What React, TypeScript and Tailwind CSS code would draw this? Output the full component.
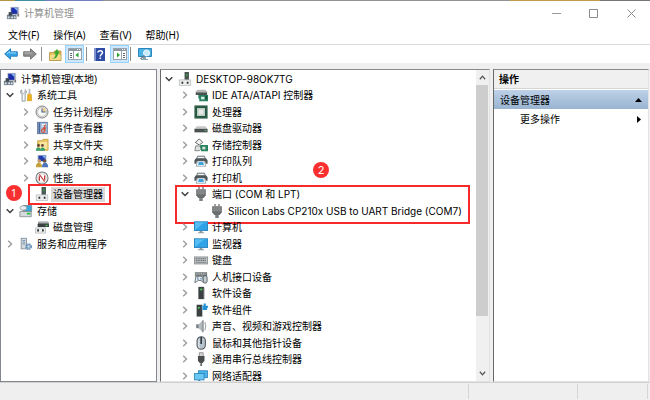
import type { ReactNode } from "react";

type IconName =
  | "computer" | "tools" | "clock" | "event" | "share" | "users" | "perf" | "device"
  | "storage" | "disk" | "services" | "ide" | "cpu" | "drive" | "storagectl" | "printer"
  | "plug" | "monitor" | "keyboard" | "hid" | "software" | "component" | "speaker"
  | "mouse" | "usb" | "network";

const art: Record<IconName, ReactNode> = {
  computer: (
    <>
      <rect x="5" y="1" width="10" height="9" fill="#b9bdc4" />
      <rect x="6" y="2" width="7" height="7" fill="#1c2fa8" />
      <path d="M9 2h4v4z" fill="#7fb2f5" />
      <path d="M13 9h2v3h-2z" fill="#777" />
      <path d="M1 10h11v5H1z" fill="#6f7d8a" />
      <path d="M3 7h4v4H3z" fill="#3c4852" />
      <path d="M2 12h2v2H2zM6 12h2v2H6zM9 12h2v2H9z" fill="#dfe6ea" />
    </>
  ),
  tools: (
    <>
      <path d="M3 2v3l2 1.500 2-1.500V2c2 1 2 4 0 5v8H3.500V7C1 6 1.500 3 3 2z" fill="#f4f6f7" stroke="#8b9399" strokeWidth="1" />
      <path d="M11 1h2v6h-2z" fill="#b8bcc0" />
      <path d="M10 7h4l.5 7.500h-5z" fill="#efb21e" stroke="#c98d0c" strokeWidth=".6" />
    </>
  ),
  clock: (
    <>
      <circle cx="8" cy="8" r="6.900" fill="#dcdcd8" stroke="#77797c" strokeWidth="1" />
      <circle cx="8" cy="8" r="5" fill="#fbfaf4" stroke="#aaa" strokeWidth=".6" />
      <path d="M8 3.500A4.500 4.500 0 0112.500 8H8z" fill="#f2d28a" />
      <path d="M8 4v4h4" fill="none" stroke="#3f5e93" strokeWidth="1.200" />
    </>
  ),
  event: (
    <>
      <rect x="3" y="1.500" width="11" height="13" fill="#a9c4e3" stroke="#536f99" />
      <path d="M4 2h2v12H4z" fill="#4b6792" />
      <path d="M8 4h5M8 6h3" stroke="#fff" />
      <path d="M12 4l-2 4h2l-2 3" stroke="#d4462c" strokeWidth="1.300" fill="none" />
      <circle cx="9.500" cy="11" r="2" fill="none" stroke="#d44a2c" strokeWidth="1.300" />
    </>
  ),
  share: (
    <>
      <path d="M3 3h5l1-1.500h6V14H3z" fill="#eac55f" stroke="#b88d2a" strokeWidth=".7" />
      <path d="M5 4.500h9v8H5z" fill="#f8e3a0" />
      <circle cx="4" cy="8.500" r="1.600" fill="#604432" />
      <circle cx="8.500" cy="8.500" r="1.600" fill="#604432" />
      <path d="M1 14.500c0-5 5.500-5 5.500 0zM6 14.500c0-5 5.500-5 5.500 0z" fill="#35a070" />
    </>
  ),
  users: (
    <>
      <rect x="3" y="1" width="10" height="8" fill="#aab4c0" />
      <rect x="4" y="2" width="8" height="6" fill="#213db0" />
      <path d="M8 2h4v4z" fill="#7fb2f5" />
      <circle cx="5" cy="8" r="2" fill="#c79865" />
      <circle cx="11" cy="8" r="2" fill="#72503a" />
      <path d="M1 15c0-7 7-7 7 0z" fill="#c1a13a" />
      <path d="M8 15c0-7 7-7 7 0z" fill="#4c72b9" />
    </>
  ),
  perf: (
    <>
      <circle cx="8" cy="8" r="6.900" fill="#efefef" stroke="#77797c" strokeWidth="1.200" />
      <circle cx="8" cy="8" r="4.800" fill="#fff" stroke="#bbb" strokeWidth=".6" />
      <path d="M5 4l6 8M5 11V6M11 5v5" stroke="#c02f30" strokeWidth="1.400" fill="none" />
    </>
  ),
  device: (
    <>
      <rect x="7.500" y="0" width="5" height="9" fill="#4a5452" />
      <path d="M9 2h2v3H9z" fill="#3f8f4a" />
      <path d="M1.500 9h13v6.500h-13z" fill="#eceeee" stroke="#b0b4b6" strokeWidth=".8" />
      <path d="M4 11h2v2.500H4zM10 11h2v2.500h-2z" fill="#2c3233" />
    </>
  ),
  storage: (
    <>
      <rect x="4" y="1" width="11" height="8" rx="1" fill="#8c969c" />
      <rect x="7" y="2" width="7" height="6" fill="#35a5da" />
      <ellipse cx="5" cy="4.500" rx="4" ry="2.500" fill="#e7ecef" stroke="#7d888e" strokeWidth=".7" />
      <path d="M1 8.500h13v6H1z" fill="#d5dadc" stroke="#737c80" strokeWidth=".8" />
      <path d="M9 10h4v2H9z" fill="#2fbd47" />
    </>
  ),
  disk: (
    <>
      <path d="M4 2h11l1 3v3H3V5z" fill="#3b4142" />
      <path d="M4 2h11l.5 2h-12z" fill="#a9aeb0" />
      <path d="M12 5.500h2.500V7H12z" fill="#48c455" />
      <path d="M.5 9h11.500v6H.5z" fill="#eceeee" stroke="#b0b4b6" strokeWidth=".8" />
      <path d="M2.500 10.500h2V13h-2zM8 10.500h2V13H8z" fill="#2c3233" />
    </>
  ),
  services: (
    <>
      <rect x="2.500" y="1.500" width="6" height="12" fill="#d4dade" stroke="#85909a" />
      <path d="M4 4h3M4 6h3M4 8h3" stroke="#6b8aaa" />
      <circle cx="11" cy="11" r="3" fill="none" stroke="#7198bd" strokeWidth="2" strokeDasharray="1.600 .8" />
      <circle cx="11" cy="11" r="2" fill="#c4d8ea" stroke="#5f89b3" />
    </>
  ),
  ide: (
    <>
      <path d="M2 4l2-2h9l2 2v1H2z" fill="#b4b8b8" />
      <path d="M2 5h13v3H2z" fill="#4d5353" />
      <path d="M5 8h11v7H6V12H5z" fill="#258060" />
      <path d="M8 10h4v3H8z" fill="#d7e8de" />
      <path d="M13 9h2v4h-2z" fill="#164c3a" />
    </>
  ),
  cpu: (
    <>
      <rect x="2" y="2" width="12" height="12" fill="#dfe6e2" stroke="#22553d" strokeWidth="3" />
      <rect x="1" y="1" width="14" height="14" fill="none" stroke="#7fa08e" strokeWidth=".8" strokeDasharray="1 1" />
      <rect x="4.500" y="4.500" width="7" height="7" fill="#e4e8e6" stroke="#a9bdb2" />
    </>
  ),
  drive: (
    <>
      <path d="M3 6h10l2.500 3H.5z" fill="#c5c8c9" />
      <path d="M.5 9h15v4H.5z" fill="#4b5151" />
      <path d="M12 10.500h2v1h-2z" fill="#5ed068" />
    </>
  ),
  storagectl: (
    <>
      <path d="M1.500 5L6 1l4 4-4 3z" fill="#f0f0ef" stroke="#4c5353" />
      <path d="M2 9h4l3 3-3 2.500H1z" fill="#e0e2e1" stroke="#5a6060" strokeWidth=".8" />
      <path d="M7 8h9v7H8v-3H7z" fill="#288260" />
      <path d="M9.500 10H13v3H9.500z" fill="#d5e5dc" />
    </>
  ),
  printer: (
    <>
      <path d="M4 2.500h8l1 3H3z" fill="#f2f6f8" stroke="#535a5d" />
      <path d="M2 5h12l1.500 2v4h-2l-1-3h-9l-1 3h-2V7z" fill="#4f5659" />
      <path d="M4 8h8l1.500 6h-11z" fill="#f4fafd" stroke="#5c6b72" strokeWidth=".6" />
      <path d="M5.500 9h5l.8 3.500H4.700z" fill="#3ea2dc" />
    </>
  ),
  plug: (
    <>
      <path d="M5 0h1.500v2.500H5zM9.500 0H11v2.500H9.500z" fill="#6d7071" />
      <path d="M2.500 2.500h11v7l-2.500 3H5l-2.500-3z" fill="#6a6d6e" />
      <path d="M4.700 3.500v5M6.900 3.500v5M9.100 3.500v5M11.300 3.500v5" stroke="#b2b5b6" strokeWidth=".8" />
      <path d="M6 12.500h4V16H6z" fill="#7d8081" />
    </>
  ),
  monitor: (
    <>
      <rect x="0" y="1.500" width="16" height="11" fill="#2480bd" />
      <rect x="1" y="2.500" width="14" height="9" fill="#55bdf3" />
      <path d="M1 11.500L12 2.500h3v9z" fill="#2fa3e6" />
      <path d="M6.500 12.500h3V14h2v1h-7v-1h2z" fill="#8f999e" />
    </>
  ),
  keyboard: (
    <>
      <rect x=".5" y="4.500" width="15" height="8" fill="#bfc3c5" stroke="#8a8f92" />
      <path d="M2 6.500h12M2 8.500h12" stroke="#565c5f" strokeDasharray="1.400 .6" />
      <path d="M2 10.700h12" stroke="#7b8083" />
    </>
  ),
  hid: (
    <>
      <rect x="1" y="2.500" width="14" height="5" fill="#777d80" />
      <path d="M2 4.500h12" stroke="#dde1e2" strokeDasharray="1.200 .8" />
      <path d="M2 8c4-1.500 6-1 8 0l1 6.500-3-2.500H5l-4 2.500z" fill="#e4eaed" stroke="#535d62" strokeWidth=".9" />
      <rect x="10.500" y="6.500" width="4.500" height="8.500" rx="2.200" fill="#c3cdd4" stroke="#454e53" strokeWidth=".9" />
      <path d="M4.500 8.500v3M8 9v2" stroke="#2b6ea8" />
    </>
  ),
  software: (
    <>
      <rect x="5" y="1" width="6.500" height="14" fill="#3b4042" />
      <path d="M7 3h2.500v2H7z" fill="#4ecb58" />
      <path d="M11 2h1v13h-1z" fill="#9da2a3" />
    </>
  ),
  component: (
    <>
      <rect x="3" y="2" width="6.500" height="13.500" fill="#3b4042" />
      <path d="M4.500 4.500h2v2h-2z" fill="#4ecb58" />
      <path d="M9 3h2V.5h2.500V3H16v2.500h-1V8H9z" fill="#2490d6" />
      <path d="M9 3h1v5H9z" fill="#83c7f1" />
    </>
  ),
  speaker: (
    <>
      <path d="M2.500 6h3v4.500h-3z" fill="#777e82" />
      <path d="M5.500 6L10 1.500V15l-4.500-4.500z" fill="#b3babd" />
      <path d="M9.500 1.500H11V15H9.500z" fill="#7d8589" />
      <path d="M12.500 3.500c1.200 3 1.200 6 0 9.500" fill="none" stroke="#a5adb1" strokeWidth="1.300" />
    </>
  ),
  mouse: (
    <>
      <rect x="3.500" y=".8" width="9.500" height="14.400" rx="4.700" fill="#b7c3cc" stroke="#50595e" strokeWidth="1.200" />
      <path d="M8.200 1v8" stroke="#2f3639" strokeWidth="1.800" />
      <path d="M5.500 4v7c0 1 .5 2 1 2.500" stroke="#eef3f6" fill="none" />
    </>
  ),
  usb: (
    <>
      <path d="M6 .8h4.500V5H6z" fill="#d8d8d8" stroke="#777" strokeWidth=".8" />
      <path d="M4.500 4.500h7.500v5.500l-2 2.500H6.500l-2-2.500z" fill="#4b4e4f" />
      <path d="M7.200 12h2v4h-2z" fill="#67696a" />
    </>
  ),
  network: (
    <>
      <rect x="5" y="2" width="10.500" height="8" fill="#49b4e9" stroke="#1c78b0" strokeWidth=".8" />
      <rect x=".5" y="5" width="11" height="7.500" fill="#69c7f3" stroke="#1c78b0" strokeWidth=".8" />
      <path d="M5 12.500h2v2H5z" fill="#3b83ad" />
    </>
  ),
};

function Icon({ name }: { name: IconName }) {
  return (
    <svg viewBox="0 0 16 16" className="size-[14px] shrink-0" aria-hidden="true">
      {art[name]}
    </svg>
  );
}

type Item = {
  label: string;
  icon: IconName;
  depth: 0 | 1 | 2 | 3;
  state?: "open" | "closed";
  selected?: boolean;
  mark?: ReactNode;
};

const badge =
  "absolute flex size-4 items-center justify-center rounded-full bg-[#f9302f] text-[11px] leading-4 text-white";
const frame = "pointer-events-none absolute border-2 border-[#f62a2a]";

const consoleTree: Item[] = [
  { label: "计算机管理(本地)", icon: "computer", depth: 0 },
  { label: "系统工具", icon: "tools", depth: 0, state: "open" },
  { label: "任务计划程序", icon: "clock", depth: 1, state: "closed" },
  { label: "事件查看器", icon: "event", depth: 1, state: "closed" },
  { label: "共享文件夹", icon: "share", depth: 1, state: "closed" },
  { label: "本地用户和组", icon: "users", depth: 1, state: "closed" },
  { label: "性能", icon: "perf", depth: 1, state: "closed" },
  {
    label: "设备管理器",
    icon: "device",
    depth: 2,
    selected: true,
    mark: (
      <>
        <span className={`${frame} -top-0.5 left-[26px] h-[21px] w-[83px]`} />
        <span className={`${badge} -top-px left-1`}>1</span>
      </>
    ),
  },
  { label: "存储", icon: "storage", depth: 0, state: "open" },
  { label: "磁盘管理", icon: "disk", depth: 2 },
  { label: "服务和应用程序", icon: "services", depth: 0, state: "closed" },
];

const deviceTree: Item[] = [
  { label: "DESKTOP-98OK7TG", icon: "device", depth: 0, state: "open" },
  { label: "IDE ATA/ATAPI 控制器", icon: "ide", depth: 1, state: "closed" },
  { label: "处理器", icon: "cpu", depth: 1, state: "closed" },
  { label: "磁盘驱动器", icon: "drive", depth: 1, state: "closed" },
  { label: "存储控制器", icon: "storagectl", depth: 1, state: "closed" },
  { label: "打印队列", icon: "printer", depth: 1, state: "closed" },
  { label: "打印机", icon: "printer", depth: 1, state: "closed" },
  {
    label: "端口 (COM 和 LPT)",
    icon: "plug",
    depth: 1,
    state: "open",
    mark: (
      <>
        <span className={`${frame} -top-px left-[14px] h-[39px] w-[295px]`} />
        <span className={`${badge} -top-6 left-[152px]`}>2</span>
      </>
    ),
  },
  { label: "Silicon Labs CP210x USB to UART Bridge (COM7)", icon: "plug", depth: 3 },
  { label: "计算机", icon: "monitor", depth: 1, state: "closed" },
  { label: "监视器", icon: "monitor", depth: 1, state: "closed" },
  { label: "键盘", icon: "keyboard", depth: 1, state: "closed" },
  { label: "人机接口设备", icon: "hid", depth: 1, state: "closed" },
  { label: "软件设备", icon: "software", depth: 1, state: "closed" },
  { label: "软件组件", icon: "component", depth: 1, state: "closed" },
  { label: "声音、视频和游戏控制器", icon: "speaker", depth: 1, state: "closed" },
  { label: "鼠标和其他指针设备", icon: "mouse", depth: 1, state: "closed" },
  { label: "通用串行总线控制器", icon: "usb", depth: 1, state: "closed" },
  { label: "网络适配器", icon: "network", depth: 1, state: "closed" },
];

const indent = { 0: "pl-0", 1: "pl-4", 2: "pl-8", 3: "pl-12" };

function Tree({ items, label }: { items: Item[]; label: string }) {
  return (
    <ul role="tree" aria-label={label} className="min-w-0 flex-1">
      {items.map((it) => (
        <li
          key={it.label}
          role="treeitem"
          aria-selected={!!it.selected}
          className={`relative flex items-center whitespace-nowrap odd:h-[17px] even:h-4 ${indent[it.depth]}`}
        >
          {it.state && (
            <button aria-label={it.state === "open" ? "折叠" : "展开"} className="flex w-4 shrink-0 justify-center">
              <svg viewBox="0 0 8 8" className="size-2" fill="none" strokeWidth="1.500" aria-hidden="true">
                {it.state === "open" ? (
                  <path d="M.7 2.200L4 5.500l3.300-3.300" stroke="#404040" />
                ) : (
                  <path d="M2.200.7L5.500 4 2.200 7.300" stroke="#a0a0a0" />
                )}
              </svg>
            </button>
          )}
          <span className="flex w-4 shrink-0 justify-center">
            <Icon name={it.icon} />
          </span>
          <span className={it.selected ? "ml-px bg-[#d9d9d9] px-0.5 leading-[15px]" : "pl-[3px]"}>{it.label}</span>
          {it.mark}
        </li>
      ))}
    </ul>
  );
}

function Separator() {
  return <span className="h-[14px] w-px bg-[#8d8d8d]" />;
}

const toggled = "flex h-[18px] w-[19px] items-center justify-center border border-[#99d1ff] bg-[#cce8ff]";

function Panel({ flip }: { flip?: boolean }) {
  return (
    <svg viewBox="0 0 14 12" className="h-3 w-[14px]" aria-hidden="true">
      <rect x=".5" y=".5" width="13" height="11" fill="#fff" stroke="#9aa3ab" />
      <path d="M1 1h12v2H1z" fill="#8c97a2" />
      <path d="M9 1.500h1M11 1.500h1" stroke="#fff" />
      {flip ? (
        <>
          <path d="M8.500 3v8" stroke="#9aa3ab" />
          <path d="M10 5.500h2M10 7.500h2M10 9.500h2" stroke="#5b6670" />
          <path d="M4 4.500v5L7 7z" fill="#27a52f" />
        </>
      ) : (
        <>
          <path d="M5.500 3v8" stroke="#9aa3ab" />
          <path d="M2 5.500h2M2 7.500h2M2 9.500h2" stroke="#5b6670" />
          <path d="M10.500 4.500v5l-3-2.500z" fill="#27a52f" />
        </>
      )}
    </svg>
  );
}

export default function App() {
  return (
    <div className="flex h-screen flex-col overflow-hidden bg-[#efefef] font-['Noto_Sans','Noto_Sans_CJK_SC',sans-serif] text-[10px] leading-4 text-black">
      <div className="flex h-px shrink-0 bg-[#929295]">
        <span className="w-[15px] bg-[#b5954a]" />
        <span className="w-[30px] bg-[#3e8f9f]" />
        <span className="w-[58px] bg-[#7480bb]" />
        <span className="ml-auto w-[90px] bg-[#c39b4d]" />
        <span className="w-[50px] bg-[#777]" />
      </div>

      <header className="flex h-6 shrink-0 items-center bg-white pl-[6px]">
        <Icon name="computer" />
        <h1 className="ml-1 flex-1 text-[#8e8e8e]">计算机管理</h1>
        <div className="flex">
          <button aria-label="最小化" className="flex w-[38px] justify-center">
            <svg viewBox="0 0 9 9" className="size-[9px]"><path d="M0 4.500h9" stroke="#999" /></svg>
          </button>
          <button aria-label="最大化" className="flex w-[37px] justify-center">
            <svg viewBox="0 0 9 9" className="size-[9px]"><path d="M.5.5h8v8h-8z" fill="none" stroke="#8c8c8c" /></svg>
          </button>
          <button aria-label="关闭" className="flex w-[38px] justify-center">
            <svg viewBox="0 0 9 9" className="size-[9px]"><path d="M.5.5l8 8M8.500.5l-8 8" stroke="#8c8c8c" /></svg>
          </button>
        </div>
      </header>

      <nav className="flex h-5 shrink-0 items-center gap-[14px] border-b border-[#d9d9d9] bg-white pl-2">
        <button>文件(F)</button>
        <button>操作(A)</button>
        <button>查看(V)</button>
        <button>帮助(H)</button>
      </nav>

      <div className="flex h-[18px] shrink-0 items-center bg-white pl-1">
        <button aria-label="后退">
          <svg viewBox="0 0 14 12" className="h-3 w-[14px]">
            <path d="M.7 6L6.500.8v3h6.800v4.400H6.500v3z" fill="#35a4e8" stroke="#1c78bb" strokeWidth=".9" />
            <path d="M3 5.800l2.500-2.200v1.300h6.500" fill="none" stroke="#93d5fa" />
          </svg>
        </button>
        <button aria-label="前进" className="mr-1 ml-[5px]">
          <svg viewBox="0 0 14 12" className="h-3 w-[14px]">
            <path d="M13.300 6L7.500.8v3H.7v4.400h6.800v3z" fill="#8f8f8f" stroke="#6a6a6a" strokeWidth=".9" />
            <path d="M1.500 5h7" stroke="#bdbdbd" />
          </svg>
        </button>
        <Separator />
        <button aria-label="上移" className="mr-[3px] ml-[7px]">
          <svg viewBox="0 0 13 13" className="size-[13px]">
            <path d="M.5 4.500h4l1-1.500H12v9.500H.5z" fill="#e8c565" stroke="#b08d39" strokeWidth=".8" />
            <path d="M1 7h10.500v5H1z" fill="#f6dc8c" />
            <path d="M2.500 10.500c3 0 4-2 4-5H4.700L8 1l3 4.500H9c0 3-2 6-6.500 5z" fill="#39a82d" />
          </svg>
        </button>
        <button aria-label="显示/隐藏控制台树" className={toggled}><Panel /></button>
        <span className="w-0.5" />
        <Separator />
        <button aria-label="帮助" className="mr-[5px] ml-[7px]">
          <svg viewBox="0 0 11 13" className="h-[13px] w-[11px]">
            <path d="M0 0h11v13H0z" fill="#2e4ba6" />
            <path d="M0 0h2v13H0z" fill="#8093cf" />
            <path d="M4 4.500C4 2 8.500 2 8.500 4.500 8.500 6.500 6.300 6 6.300 8.500M6.300 9.500V11" fill="none" stroke="#fff" strokeWidth="1.500" />
          </svg>
        </button>
        <button aria-label="显示/隐藏操作窗格" className={toggled}><Panel flip /></button>
        <span className="w-px" />
        <Separator />
        <button aria-label="扫描检测硬件改动" className="ml-[7px]">
          <svg viewBox="0 0 14 13" className="h-[13px] w-[14px]">
            <path d="M.5.5h13v8H.5z" fill="#4ab2e6" stroke="#2e85b8" />
            <path d="M5 9h3v2h2v1H3v-1h2z" fill="#8fa3ad" />
            <circle cx="8.500" cy="5" r="3" fill="#c5e9fa" stroke="#f4fbff" />
            <path d="M6.500 7.500L2.500 11" stroke="#647e8c" strokeWidth="1.400" />
          </svg>
        </button>
      </div>

      <main className="mt-1.5 flex min-h-0 flex-1 gap-[3px]">
        <section className="flex w-[157px] shrink-0 overflow-hidden border border-[#828790] bg-white pl-px">
          <Tree items={consoleTree} label="控制台树" />
        </section>

        <section className="flex min-w-0 flex-1 overflow-hidden border border-t-[#8a8a8a] border-r-[#e3e3e3] border-b-[#e3e3e3] border-l-[#696969] bg-white font-['Inter','Noto_Sans_CJK_SC',sans-serif]">
          <Tree items={deviceTree} label="设备" />
          <div className="flex w-[13px] shrink-0 flex-col bg-[#f0f0f0]">
            <button aria-label="向上滚动" className="flex h-[15px] items-center justify-center">
              <svg viewBox="0 0 8 8" className="size-[7px]"><path d="M1 6l3-3.500L7 6" fill="none" stroke="#555" strokeWidth="1.500" /></svg>
            </button>
            <div className="flex flex-1 flex-col">
              <span className="mr-px flex-[230] bg-[#cdcdcd]" />
              <span className="flex-[50]" />
            </div>
            <button aria-label="向下滚动" className="flex h-[15px] items-center justify-center">
              <svg viewBox="0 0 8 8" className="size-[7px]"><path d="M1 2l3 3.500L7 2" fill="none" stroke="#555" strokeWidth="1.500" /></svg>
            </button>
          </div>
        </section>

        <aside className="mr-px w-[156px] shrink-0 border border-t-[#8a8a8a] border-r-[#e3e3e3] border-b-[#e3e3e3] border-l-[#696969] bg-white">
          <h2 className="h-[19px] border-b border-[#d5d5d5] bg-[#f0f0f0] pl-[5px] leading-[19px] font-bold">操作</h2>
          <button className="mt-px flex h-[19px] w-full items-center justify-between bg-linear-to-b from-[#bdd1e7] to-[#99b4d1] px-[6px]">
            设备管理器
            <svg viewBox="0 0 7 4" className="h-1 w-[7px]"><path d="M3.500 0L7 4H0z" /></svg>
          </button>
          <button className="flex h-5 w-full items-center justify-between pr-[7px] pl-[26px]">
            更多操作
            <svg viewBox="0 0 4 7" className="h-[7px] w-1"><path d="M0 0l4 3.500L0 7z" /></svg>
          </button>
        </aside>
      </main>

      <footer className="flex h-[18px] shrink-0 border-t border-[#d0d0d0]">
        <span className="my-px flex-1 border-r border-[#d5d5d5]" />
        <span className="my-px w-[109px] border-r border-[#d5d5d5]" />
        <span className="my-px mr-0.5 w-[70px] border-r border-[#d5d5d5]" />
      </footer>
    </div>
  );
}
